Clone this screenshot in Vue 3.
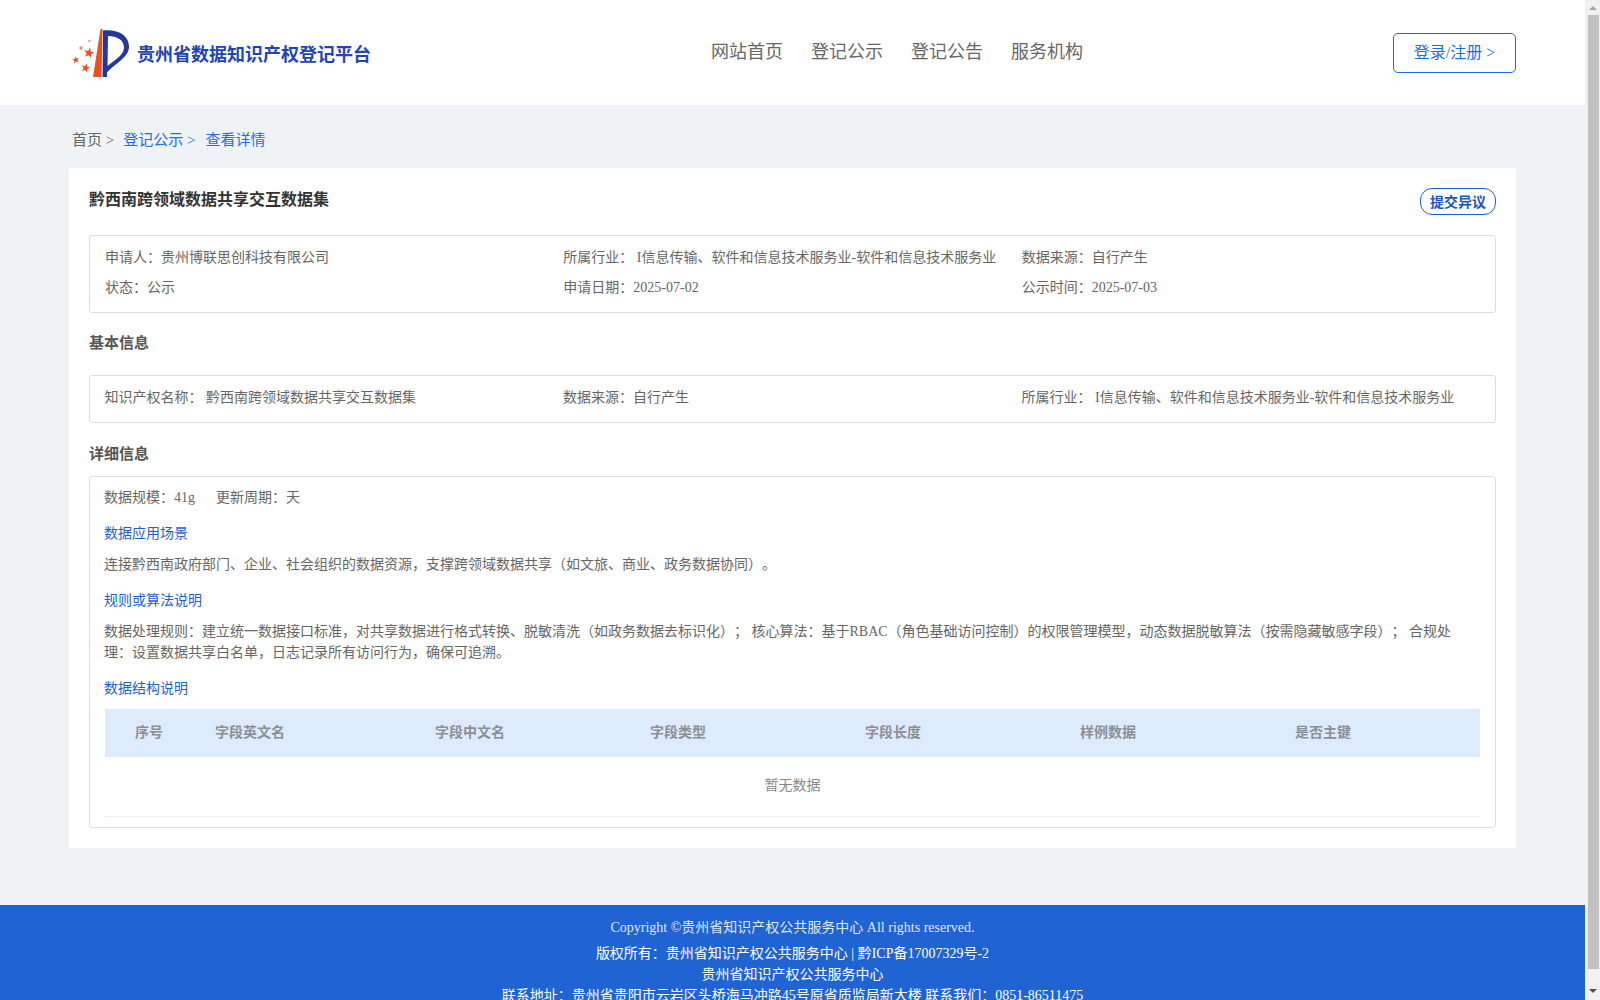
<script setup>
const fields = ['序号', '字段英文名', '字段中文名', '字段类型', '字段长度', '样例数据', '是否主键']

// five-pointed stars of the logo, tilted a little
function star(cx, cy, r, tilt) {
  const pts = []
  for (let i = 0; i < 10; i++) {
    const rad = i % 2 ? r * 0.42 : r
    const a = (-90 + tilt + i * 36) * Math.PI / 180
    pts.push((cx + rad * Math.cos(a)).toFixed(1) + ',' + (cy + rad * Math.sin(a)).toFixed(1))
  }
  return pts.join(' ')
}
const stars = [star(17, 25, 5.5, 12), star(3.8, 32, 3.8, -10), star(13.7, 40, 4.8, 15)]
</script>

<template>
  <div class="window">
    <div class="page">
      <header class="header">
        <div class="logo">
          <svg class="logo__mark" viewBox="0 0 58 50" width="58" height="50">
            <path d="M28.500 1 L30.500 1 L29.500 49 L21 49 Z" fill="#e8501f" />
            <path d="M31 2.500 C47 1 57 8 57 18.500 C57 29 45 34 35 44.500 L35 49 L30.500 49 Z M36 8 L35.500 38 C44 31 52 27 52 19.500 C52 12 45 8 36 8 Z" fill="#23389a" fill-rule="evenodd" />
            <polygon v-for="s in stars" :key="s" :points="s" fill="#e8501f" />
            <circle cx="9" cy="20" r="1.700" fill="#f08a60" />
            <circle cx="17.300" cy="13" r="1.200" fill="#f0a080" />
          </svg>
          <span class="logo__text">贵州省数据知识产权登记平台</span>
        </div>
        <nav class="nav">
          <a>网站首页</a>
          <a>登记公示</a>
          <a>登记公告</a>
          <a>服务机构</a>
        </nav>
        <button class="login">登录/注册 &gt;</button>
      </header>

      <main class="main">
        <div class="crumbs">
          <span>首页 &gt;</span>
          <a>登记公示 <i>&gt;</i></a>
          <a>查看详情</a>
        </div>

        <section class="card">
          <div class="title-row">
            <h1>黔西南跨领域数据共享交互数据集</h1>
            <button class="objection">提交异议</button>
          </div>

          <div class="box box--summary">
            <div>申请人：贵州博联思创科技有限公司</div>
            <div>所属行业： I信息传输、软件和信息技术服务业-软件和信息技术服务业</div>
            <div>数据来源：自行产生</div>
            <div>状态：公示</div>
            <div>申请日期：2025-07-02</div>
            <div>公示时间：2025-07-03</div>
          </div>

          <h2>基本信息</h2>
          <div class="box box--basic">
            <div>知识产权名称： 黔西南跨领域数据共享交互数据集</div>
            <div>数据来源：自行产生</div>
            <div>所属行业： I信息传输、软件和信息技术服务业-软件和信息技术服务业</div>
          </div>

          <h2 class="detail-title">详细信息</h2>
          <div class="box box--detail">
            <div class="scale">
              <span>数据规模：41g</span>
              <span>更新周期：天</span>
            </div>
            <h3>数据应用场景</h3>
            <p>连接黔西南政府部门、企业、社会组织的数据资源，支撑跨领域数据共享（如文旅、商业、政务数据协同）。</p>
            <h3>规则或算法说明</h3>
            <p>数据处理规则：建立统一数据接口标准，对共享数据进行格式转换、脱敏清洗（如政务数据去标识化）； 核心算法：基于RBAC（角色基础访问控制）的权限管理模型，动态数据脱敏算法（按需隐藏敏感字段）； 合规处理：设置数据共享白名单，日志记录所有访问行为，确保可追溯。</p>
            <h3>数据结构说明</h3>
            <div class="table">
              <div class="table__head">
                <span v-for="f in fields" :key="f">{{ f }}</span>
              </div>
              <div class="table__empty">暂无数据</div>
            </div>
          </div>
        </section>
      </main>

      <footer class="footer">
        <div class="copy">Copyright ©贵州省知识产权公共服务中心 All rights reserved.</div>
        <div>版权所有：贵州省知识产权公共服务中心 | 黔ICP备17007329号-2</div>
        <div>贵州省知识产权公共服务中心</div>
        <div>联系地址：贵州省贵阳市云岩区头桥海马冲路45号原省质监局新大楼 联系我们：0851-86511475</div>
      </footer>
    </div>

    <div class="scrollbar">
      <span class="scrollbar__up"></span>
      <span class="scrollbar__thumb"></span>
      <span class="scrollbar__down"></span>
    </div>
  </div>
</template>

<style>
html, body { margin: 0; height: 100%; overflow: hidden; }
</style>

<style scoped>
.window {
  display: flex;
  height: 100vh;
  overflow: hidden;
}
.page {
  flex: 1;
  min-width: 0;
  background: #eff3f6;
  font-family: "Liberation Serif", "Noto Sans CJK SC", serif;
  font-size: 14px;
  color: #666;
  text-spacing-trim: space-all;
}

.scrollbar {
  width: 15px;
  flex: none;
  background: #f1f1f1;
  display: flex;
  flex-direction: column;
  align-items: center;
}
.scrollbar__up {
  margin-top: 6px;
  border: 4px solid transparent;
  border-top: 0;
  border-bottom: 4px solid #a3a3a3;
  margin-bottom: 5px;
}
.scrollbar__thumb {
  width: 11px;
  height: 954px;
  margin-left: 1px;
  background: #c1c1c1;
}
.scrollbar__down {
  margin-top: 20px;
  border: 4px solid transparent;
  border-bottom: 0;
  border-top: 4px solid #505050;
}

.header {
  height: 105px;
  background: #fff;
  display: flex;
  align-items: center;
  padding: 0 69px 0 72px;
}
.logo { width: 639px; display: flex; align-items: center; gap: 7px; }
.logo__text { color: #1f45b5; font-size: 18px; font-weight: 700; margin-top: 1px; }
.nav { display: flex; gap: 28px; font-size: 18px; color: #666; flex: 1; margin-top: -6px; }
.login {
  width: 123px;
  height: 40px;
  padding: 0 0 3px;
  border: 1px solid #1a6be0;
  border-radius: 5px;
  background: #fff;
  color: #1a6fe8;
  font: inherit;
  font-size: 16px;
}

.main { padding: 0 69px; height: 800px; }
.crumbs { height: 63px; display: flex; align-items: center; gap: 9px; padding: 4px 0 0 3px; box-sizing: border-box; color: #666; font-size: 15px; }
.crumbs a { color: #1a6fe8; }
.crumbs i { font-style: normal; margin-right: 1px; }

.card { background: #fff; padding: 20px; height: 680px; box-sizing: border-box; }
.title-row { display: flex; justify-content: space-between; align-items: flex-start; height: 47px; }
h1 { margin: 0; font-size: 16px; line-height: 24px; color: #333; }
.objection {
  height: 27px;
  padding: 0 9px 2px;
  border: 1px solid #1e5fd0;
  border-radius: 12px;
  background: #fff;
  color: #1a55c0;
  font: inherit;
  font-size: 14px;
  font-weight: 700;
}
.box { border: 1px solid #ddd; border-radius: 3px; }
.box--summary {
  display: grid;
  grid-template-columns: repeat(3, 1fr);
  padding: 7px 15px 9px;
  line-height: 30px;
}
.box--basic {
  display: grid;
  grid-template-columns: repeat(3, 1fr);
  padding: 7px 15px 9px 14.5px;
  line-height: 30px;
}
h2 { margin: 0; font-size: 15px; line-height: 22px; padding: 19px 0 21px; color: #555; }
.detail-title { padding: 20px 0 11px; }
.box--detail { padding: 9px 15px 10px 14px; }
.scale { display: flex; gap: 21px; line-height: 24px; }
h3 { margin: 0; font-weight: 400; font-size: 14px; color: #1e5fd0; line-height: 24px; padding-top: 14px; }
.scale + h3 { padding-top: 12px; }
p { margin: 0; line-height: 21px; padding: 8px 15px 0 0; }
.table { margin: 8px 0 0 1px; }
.table__head {
  display: grid;
  grid-template-columns: 110px 220px repeat(5, 215px);
  box-sizing: border-box;
  padding-bottom: 5px;
  background: #deebfc;
  height: 48px;
  align-items: center;
  font-weight: 700;
  color: #8c8f96;
}
.table__head span:first-child { padding-left: 30px; }
.table__empty {
  height: 59px;
  line-height: 57px;
  text-align: center;
  color: #888;
  border-bottom: 1px solid #ebeef5;
}

.footer {
  background: #2063d3;
  color: #fff;
  text-align: center;
  padding: 12px 0 10px;
  line-height: 21px;
  font-size: 14px;
}
.copy { opacity: 0.85; margin-bottom: 5px; }
</style>
